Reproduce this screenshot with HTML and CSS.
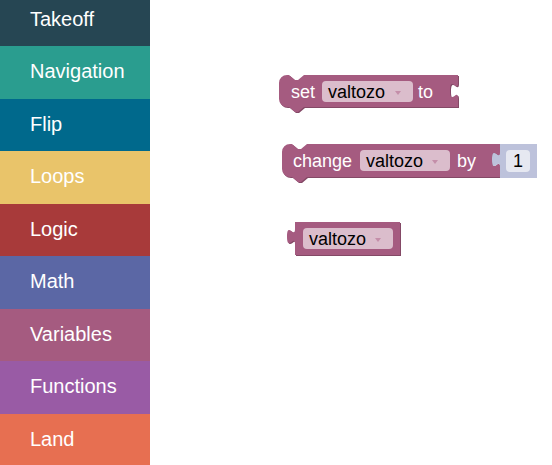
FILE: index.html
```html
<!DOCTYPE html>
<html>
<head>
<meta charset="utf-8"/>
<title>Blocks</title>
<link rel="stylesheet" href="styles.css">
</head>
<body>
<div class="app">
  <ul class="toolbox">
    <li class="cat takeoff">Takeoff</li>
    <li class="cat navigation">Navigation</li>
    <li class="cat flip">Flip</li>
    <li class="cat loops">Loops</li>
    <li class="cat logic">Logic</li>
    <li class="cat math">Math</li>
    <li class="cat variables">Variables</li>
    <li class="cat functions">Functions</li>
    <li class="cat land">Land</li>
  </ul>

  <div class="workspace">
    <svg class="canvas" width="402" height="465" viewBox="150 0 402 465">
      <!-- set valtozo to -->
      <g class="block">
        <path class="dark" transform="translate(1,1)" d="M279,83 a8,8 0 0 1 8,-8 H289 l6,5 h3 l6,-5 H458 V83 c0,10 -8,-8 -8,7.5 s8,-2.5 8,7.5 V107 H304 l-6,5 h-3 l-6,-5 H287 a8,8 0 0 1 -8,-8 Z"/>
        <path class="main" d="M279,83 a8,8 0 0 1 8,-8 H289 l6,5 h3 l6,-5 H458 V83 c0,10 -8,-8 -8,7.5 s8,-2.5 8,7.5 V107 H304 l-6,5 h-3 l-6,-5 H287 a8,8 0 0 1 -8,-8 Z"/>
        <text class="label" x="291" y="98">set</text>
        <rect class="field" x="322" y="81" width="91" height="21" rx="4"/>
        <text class="field-text" x="328" y="98">valtozo</text>
        <polygon class="arrow" points="395,91 401,91 398,95"/>
        <text class="label" x="418" y="98">to</text>
      </g>

      <!-- change valtozo by 1 -->
      <g class="block">
        <path class="dark" transform="translate(1,1)" d="M282,152 a8,8 0 0 1 8,-8 H292 l6,5 h3 l6,-5 H500 V152 c0,10 -8,-8 -8,7.5 s8,-2.5 8,7.5 V177 H307 l-6,5 h-3 l-6,-5 H290 a8,8 0 0 1 -8,-8 Z"/>
        <path class="main" d="M282,152 a8,8 0 0 1 8,-8 H292 l6,5 h3 l6,-5 H500 V152 c0,10 -8,-8 -8,7.5 s8,-2.5 8,7.5 V177 H307 l-6,5 h-3 l-6,-5 H290 a8,8 0 0 1 -8,-8 Z"/>
        <text class="label" x="293" y="167">change</text>
        <rect class="field" x="360" y="150" width="90" height="21" rx="4"/>
        <text class="field-text" x="366" y="167">valtozo</text>
        <polygon class="arrow" points="432,160 438,160 435,164"/>
        <text class="label" x="457" y="167">by</text>
        <path class="shadow" d="M500,144 H537 V178 H500 V167 c0,-10 -8,8 -8,-7.5 s8,2.5 8,-7.5 Z"/>
        <rect class="num-field" x="506" y="150" width="24" height="22" rx="4"/>
        <text class="num-text" x="518" y="167">1</text>
      </g>

      <!-- valtozo getter -->
      <g class="block">
        <path class="dark" transform="translate(1,1)" d="M295,222 H400 V255 H295 V244 c0,-10 -8,8 -8,-7.5 s8,2.5 8,-7.5 Z"/>
        <path class="main" d="M295,222 H400 V255 H295 V244 c0,-10 -8,8 -8,-7.5 s8,2.5 8,-7.5 Z"/>
        <rect class="field" x="303" y="228" width="90" height="21" rx="4"/>
        <text class="field-text" x="309" y="245">valtozo</text>
        <polygon class="arrow" points="375,238 381,238 378,242"/>
      </g>
    </svg>
  </div>
</div>
</body>
</html>
```

FILE: styles.css
```css
html, body {
   margin: 0;
   padding: 0;
   background-color: white;
   font-family: "Liberation Sans", Arial, sans-serif;
}

.app {
   display: flex;
   width: 552px;
   height: 465px;
   overflow: hidden;
}

/* toolbox, scrolled a little so the first row is cut */
.toolbox {
   list-style: none;
   margin: -6.5px 0 0 0;
   padding: 0;
   width: 150px;
   flex: none;
}

.cat {
   height: 52.5px;
   display: flex;
   align-items: center;
   padding-left: 30px;
   padding-bottom: 1px;
   box-sizing: border-box;
   color: white;
   font-size: 20px;
}

.takeoff { background-color: #264653; }
.navigation { background-color: #2a9d8f; }
.flip { background-color: #00698c; }
.loops { background-color: #e9c46a; }
.logic { background-color: #a83a3a; }
.math { background-color: #5b67a5; }
.variables { background-color: #a55b80; }
.functions { background-color: #995ba5; }
.land { background-color: #e76f51; }

.workspace {
   flex: 1;
   background-color: white;
}

.canvas {
   display: block;
}

.block .main {
   fill: #a55b80;
}

.block .dark {
   fill: #844966;
}

.block .shadow {
   fill: #bdc2db;
}

.label {
   fill: white;
   font-family: "Liberation Sans", Arial, sans-serif;
   font-size: 18px;
}

.field {
   fill: #dbbdcc;
}

.field-text, .num-text {
   fill: black;
   font-family: "Liberation Sans", Arial, sans-serif;
   font-size: 18px;
}

.num-text {
   text-anchor: middle;
}

.num-field {
   fill: #e6e8f1;
}

.arrow {
   fill: #c48ea9;
}
```
